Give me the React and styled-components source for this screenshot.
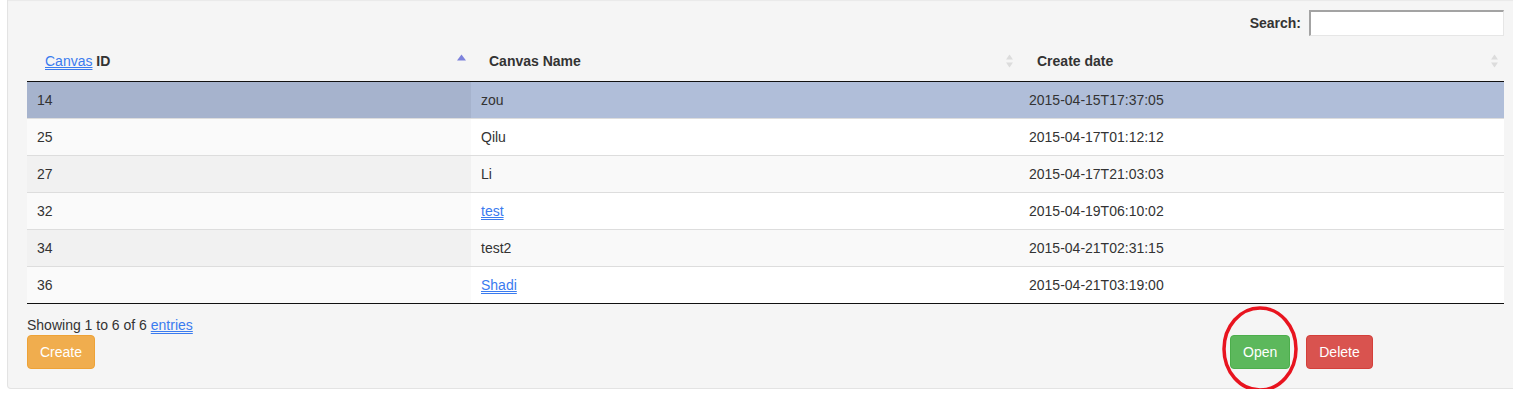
import React from 'react';
import styled, { createGlobalStyle } from 'styled-components';

const GlobalStyle = createGlobalStyle`
  body {
    margin: 0;
    overflow: hidden;
    background: #fff;
    font-family: "Liberation Sans", Arial, sans-serif;
    font-size: 14px;
    line-height: 20px;
    color: #333;
  }
`;

const Well = styled.div`
  width: 1477px;
  margin-left: 7px;
  padding: 10px 19px 19px;
  background: #f5f5f5;
  border: 1px solid #e3e3e3;
  border-top: none;
  border-radius: 0 0 4px 4px;
  box-shadow: inset 0 1px 1px rgba(0, 0, 0, 0.05);
`;

const Filter = styled.div`
  display: flex;
  justify-content: flex-end;
  align-items: center;
  height: 26px;
  margin-bottom: 5px;
`;

const FilterLabel = styled.label`
  font-weight: bold;
  margin-right: 8px;
`;

const SearchInput = styled.input`
  width: 195px;
  height: 26px;
  box-sizing: border-box;
  padding: 0 4px;
  background: #fff;
  border-style: solid;
  border-width: 2px 1px 1px 2px;
  border-color: #a3a3a3 #e6e6e6 #e6e6e6 #a3a3a3;
  font: inherit;
  outline: none;
`;

const Table = styled.table`
  width: 100%;
  border-collapse: separate;
  border-spacing: 0;
  border-bottom: 1px solid #111;
  table-layout: fixed;
`;

const Th = styled.th`
  position: relative;
  height: 40px;
  box-sizing: border-box;
  padding: 10px 18px;
  text-align: left;
  font-weight: bold;
  border-bottom: 1px solid #111;
  width: ${p => p.$w}px;
`;

const SortIcon = styled.svg`
  position: absolute;
  right: 5px;
  top: 50%;
  transform: translateY(-50%);
`;

const Td = styled.td`
  padding: 8px 10px;
  height: 20px;
  border-top: ${p => (p.$first ? 'none' : '1px solid #ddd')};
  background: ${p => p.$bg};
  white-space: nowrap;
`;

const Link = styled.a`
  color: #3a7bef;
  font-weight: normal;
  text-decoration: underline double;
  cursor: pointer;
`;

const Info = styled.div`
  margin-top: 11px;
`;

const Actions = styled.div`
  display: grid;
  grid-template-columns: 1187px auto auto;
  justify-content: start;
  column-gap: 16px;
`;

const colors = {
  warning: ['#f0ad4e', '#eea236'],
  success: ['#5cb85c', '#4cae4c'],
  danger: ['#d9534f', '#d43f3a'],
};

const Button = styled.button`
  font: inherit;
  line-height: 20px;
  padding: 6px 12px;
  color: #fff;
  background: ${p => colors[p.$kind][0]};
  border: 1px solid ${p => colors[p.$kind][1]};
  border-radius: 4px;
  cursor: pointer;
`;

const Marked = styled.span`
  position: relative;
  display: inline-block;
`;

const Circle = styled.svg`
  position: absolute;
  left: -10px;
  top: -31px;
  pointer-events: none;
`;

const rows = [
  { id: 14, name: 'zou', date: '2015-04-15T17:37:05', selected: true },
  { id: 25, name: 'Qilu', date: '2015-04-17T01:12:12' },
  { id: 27, name: 'Li', date: '2015-04-17T21:03:03' },
  { id: 32, name: 'test', date: '2015-04-19T06:10:02', link: true },
  { id: 34, name: 'test2', date: '2015-04-21T02:31:15' },
  { id: 36, name: 'Shadi', date: '2015-04-21T03:19:00', link: true },
];

function rowColors(i, selected) {
  if (selected) return ['#a6b3cd', '#b0bed9'];
  return i % 2 === 0 ? ['#f1f1f1', '#f9f9f9'] : ['#fafafa', '#ffffff'];
}

const SortAsc = () => (
  <SortIcon width="9" height="19" viewBox="0 0 9 19">
    <path d="M4.5 3 L9 9 L0 9 Z" fill="#7d82dc" />
  </SortIcon>
);

const SortBoth = () => (
  <SortIcon width="9" height="19" viewBox="0 0 9 19">
    <path d="M4.5 3 L8 8 L1 8 Z" fill="#dcdcdc" />
    <path d="M1 11 L8 11 L4.5 16 Z" fill="#dcdcdc" />
  </SortIcon>
);

export default function App() {
  return (
    <>
      <GlobalStyle />
      <Well>
        <Filter>
          <FilterLabel>Search:</FilterLabel>
          <SearchInput type="search" />
        </Filter>
        <Table>
          <thead>
            <tr>
              <Th $w={444}><Link>Canvas</Link> ID<SortAsc /></Th>
              <Th $w={548}>Canvas Name<SortBoth /></Th>
              <Th $w={485}>Create date<SortBoth /></Th>
            </tr>
          </thead>
          <tbody>
            {rows.map((r, i) => {
              const [sorted, base] = rowColors(i, r.selected);
              return (
                <tr key={r.id}>
                  <Td $first={i === 0} $bg={sorted}>{r.id}</Td>
                  <Td $first={i === 0} $bg={base}>{r.link ? <Link>{r.name}</Link> : r.name}</Td>
                  <Td $first={i === 0} $bg={base}>{r.date}</Td>
                </tr>
              );
            })}
          </tbody>
        </Table>
        <Info>Showing 1 to 6 of 6 <Link>entries</Link></Info>
        <Actions>
          <div><Button $kind="warning">Create</Button></div>
          <Marked>
            <Button $kind="success">Open</Button>
            <Circle width="80" height="90" viewBox="0 0 80 90">
              <ellipse cx="40" cy="45" rx="36" ry="41" fill="none" stroke="#e8141f" strokeWidth="3.5" />
            </Circle>
          </Marked>
          <div><Button $kind="danger">Delete</Button></div>
        </Actions>
      </Well>
    </>
  );
}
